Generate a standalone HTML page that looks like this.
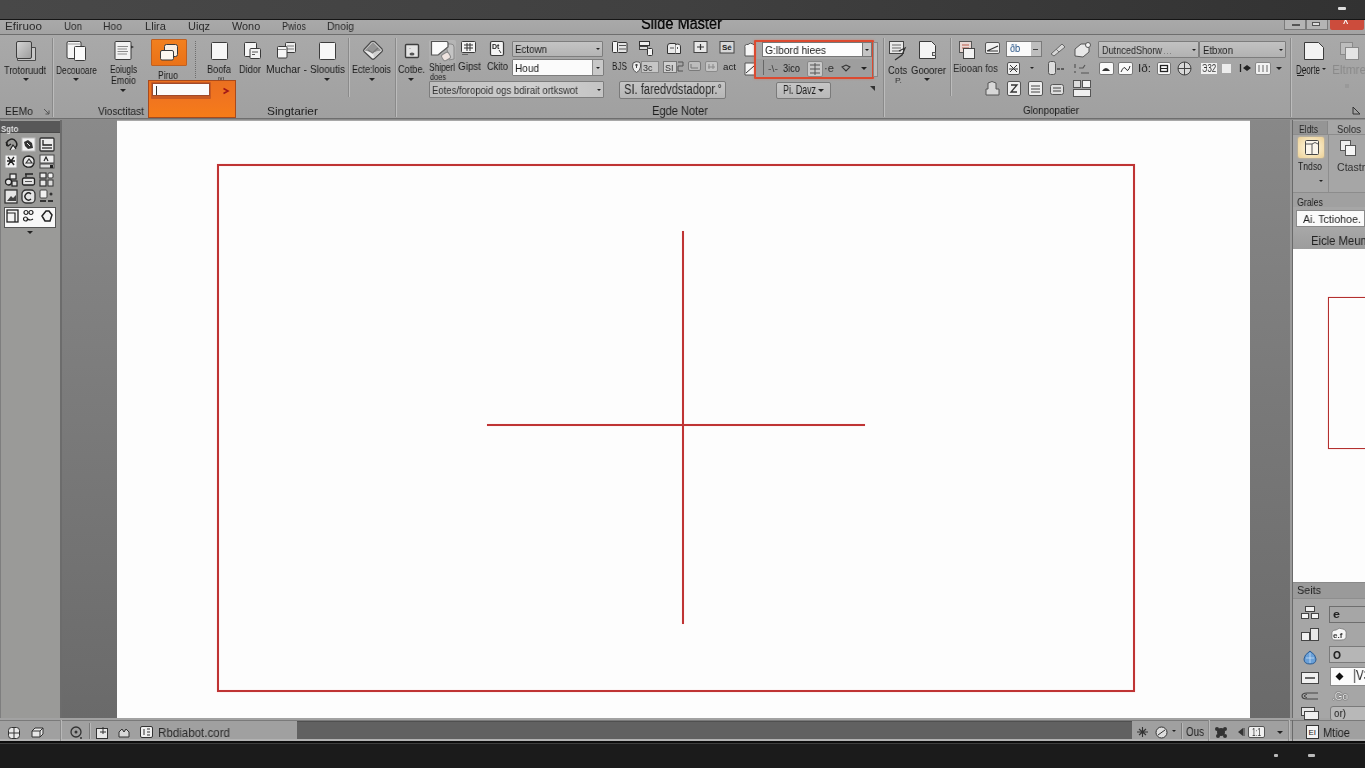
<!DOCTYPE html><html><head><meta charset="utf-8"><style>
*{margin:0;padding:0;box-sizing:border-box}
html,body{width:1365px;height:768px;overflow:hidden;background:#a8a8a8;font-family:"Liberation Sans",sans-serif;color:#222}
.a{position:absolute}
.t{white-space:nowrap;line-height:1;transform-origin:0 0;will-change:transform}
svg{overflow:visible}
</style></head><body><div class="a" style="left:0px;top:20px;width:1365px;height:14px;background:linear-gradient(#a9a9a9,#a3a3a3)"></div>
<div class="a t" style="left:641px;top:15.02px;font-size:17.39px;color:#080808;transform:scaleX(0.838);text-shadow:0 0 0.5px #000">Slide Master</div>
<div class="a" style="left:0px;top:0px;width:1365px;height:19px;background:linear-gradient(90deg,#484848,#404040 50%,#323232)"></div>
<div class="a" style="left:0px;top:19px;width:1365px;height:1px;background:#151515"></div>
<div class="a" style="left:0px;top:34px;width:1365px;height:1px;background:#6e6e6e"></div>
<div class="a" style="left:0px;top:35px;width:1365px;height:83px;background:linear-gradient(#a9a9a9,#a0a0a0)"></div>
<div class="a" style="left:0px;top:118px;width:1365px;height:1px;background:#6e6e6e"></div>
<div class="a" style="left:0px;top:119px;width:1365px;height:1px;background:#8c8c8c"></div>
<div class="a" style="left:0px;top:120px;width:60px;height:598px;background:#9a9a98;border-left:1px solid #7e7e7e"></div>
<div class="a" style="left:0px;top:121px;width:60px;height:12px;background:#585858;border-bottom:1px solid #4a4a4a"></div>
<div class="a" style="left:60px;top:120px;width:2px;height:598px;background:#6c6c6c"></div>
<div class="a" style="left:62px;top:120px;width:55px;height:598px;background:linear-gradient(#8a8a8a,#7a7a7a 50%,#6a6a6a)"></div>
<div class="a" style="left:117px;top:121px;width:1133px;height:597px;background:#fdfdfd"></div>
<div class="a" style="left:1250px;top:120px;width:40px;height:598px;background:linear-gradient(#888888,#787878 50%,#6a6a6a)"></div>
<div class="a" style="left:1290px;top:120px;width:2px;height:598px;background:#9a9a9a"></div>
<div class="a" style="left:1292px;top:120px;width:1px;height:598px;background:#6a6a6a"></div>
<div class="a" style="left:1293px;top:120px;width:72px;height:598px;background:#a6a6a6"></div>
<div class="a" style="left:0px;top:718px;width:1365px;height:2px;background:#a2a2a2"></div>
<div class="a" style="left:0px;top:720px;width:1365px;height:1px;background:#7a7a7a"></div>
<div class="a" style="left:0px;top:721px;width:1365px;height:18px;background:#a0a0a0"></div>
<div class="a" style="left:297px;top:721px;width:835px;height:18px;background:#616161;border-top:1px solid #505050"></div>
<div class="a" style="left:0px;top:739px;width:1365px;height:2px;background:#b2b2b2"></div>
<div class="a" style="left:0px;top:741px;width:1365px;height:2px;background:#0c0c0c"></div>
<div class="a" style="left:0px;top:743px;width:1365px;height:1px;background:#3e3e3e"></div>
<div class="a" style="left:0px;top:744px;width:1365px;height:24px;background:#1b1b1b"></div>
<div class="a" style="left:217px;top:164px;width:918px;height:528px;border:2px solid #bf3434;box-shadow:0 0 1px rgba(240,80,80,.35),inset 0 0 1px rgba(240,80,80,.35)"></div>
<div class="a" style="left:682px;top:231px;width:2px;height:393px;background:#bf3434;box-shadow:0 0 1px rgba(240,80,80,.35)"></div>
<div class="a" style="left:487px;top:424px;width:378px;height:2px;background:#bf3434;box-shadow:0 0 1px rgba(240,80,80,.35)"></div>
<div class="a t" style="left:5px;top:20.56px;font-size:10.87px;color:#2a2a2a;transform:scaleX(1.074);">Efiruoo</div>
<div class="a t" style="left:64px;top:20.56px;font-size:10.87px;color:#2a2a2a;transform:scaleX(0.903);">Uon</div>
<div class="a t" style="left:103px;top:20.56px;font-size:10.87px;color:#2a2a2a;transform:scaleX(0.953);">Hoo</div>
<div class="a t" style="left:145px;top:20.56px;font-size:10.87px;color:#2a2a2a;transform:scaleX(1.022);">Llira</div>
<div class="a t" style="left:188px;top:20.56px;font-size:10.87px;color:#2a2a2a;transform:scaleX(1.012);">Uiqz</div>
<div class="a t" style="left:232px;top:20.56px;font-size:10.87px;color:#2a2a2a;transform:scaleX(0.993);">Wono</div>
<div class="a t" style="left:282px;top:20.56px;font-size:10.87px;color:#2a2a2a;transform:scaleX(0.828);">Pwios</div>
<div class="a t" style="left:327px;top:20.56px;font-size:10.87px;color:#2a2a2a;transform:scaleX(0.951);">Dnoig</div>
<div class="a" style="left:1284px;top:20px;width:22px;height:10px;background:#b4b4b4;border:1px solid #7a7a7a;border-top:none"></div>
<div class="a" style="left:1292px;top:24px;width:8px;height:2px;background:#eee;border:1px solid #555"></div>
<div class="a" style="left:1306px;top:20px;width:22px;height:10px;background:#b4b4b4;border:1px solid #7a7a7a;border-top:none"></div>
<div class="a" style="left:1312px;top:22px;width:8px;height:4px;background:#ddd;border:1px solid #555"></div>
<div class="a" style="left:1330px;top:20px;width:34px;height:10px;background:#cc4c3c;border-radius:0 0 2px 2px"></div>
<div class="a t" style="left:1343px;top:19px;font-size:9px;color:#fff;font-weight:bold">^</div>
<div class="a" style="left:1338px;top:7px;width:8px;height:3px;background:#ddd;border-radius:1px"></div>
<div class="a" style="left:52px;top:38px;width:1px;height:79px;background:#8a8a8a"></div>
<div class="a" style="left:53px;top:38px;width:1px;height:79px;background:#bcbcbc"></div>
<svg class="a" style="left:15px;top:40px;" width="23" height="22" viewBox="0 0 23 22"><defs><linearGradient id="g1" x1="0" y1="0" x2="1" y2="1"><stop offset="0" stop-color="#d6d6d6"/><stop offset="1" stop-color="#9c9c9c"/></linearGradient></defs><path d="M16.5 7.5 H20.5 V20.5 H2.5 V17.5" fill="#c8c8c8" stroke="#4a4a4a" stroke-width="1"/><rect x="1.5" y="1.5" width="15" height="17" rx="1.5" fill="url(#g1)" stroke="#3e3e3e" stroke-width="1"/></svg>
<div class="a t" style="left:4px;top:65.06px;font-size:10.87px;color:#1c1c1c;transform:scaleX(0.844);">Trotoruudt</div>
<div class="a" style="left:23px;top:77.5px;width:0;height:0;border-left:3px solid transparent;border-right:3px solid transparent;border-top:3px solid #222"></div>
<div class="a t" style="left:5px;top:105.94px;font-size:11.59px;color:#1e1e1e;transform:scaleX(0.887);">EEMo</div>
<svg class="a" style="left:43px;top:108px;" width="7" height="7" viewBox="0 0 7 7"><path d="M1 1 L6 6 M6 2.5 V6 H2.5" stroke="#555" fill="none"/></svg>
<svg class="a" style="left:66px;top:40px;" width="21" height="22" viewBox="0 0 21 22"><rect x="1" y="1.5" width="14" height="17" rx="1.5" fill="#f4f4f4" stroke="#3a3a3a"/><path d="M2 4 H14" stroke="#999"/><rect x="8.5" y="6.5" width="11" height="14" rx="1" fill="#fafafa" stroke="#3a3a3a"/></svg>
<div class="a t" style="left:56px;top:65.06px;font-size:10.87px;color:#1c1c1c;transform:scaleX(0.771);">Decouoare</div>
<div class="a" style="left:73px;top:77.5px;width:0;height:0;border-left:3px solid transparent;border-right:3px solid transparent;border-top:3px solid #222"></div>
<svg class="a" style="left:114px;top:40px;" width="21" height="21" viewBox="0 0 21 21"><rect x="1" y="1.5" width="16" height="18" rx="1" fill="#f2f2f2" stroke="#3a3a3a"/><path d="M17 5.5 L20 7 L17 8.5 Z" fill="#333"/><path d="M3.5 6.5 H14 M3.5 9 H13 M3.5 11.5 H14 M3.5 14 H13" stroke="#8a8a8a" stroke-width="1.2"/></svg>
<div class="a t" style="left:110px;top:65.18px;font-size:10.14px;color:#1c1c1c;transform:scaleX(0.811);">Eoiugls</div>
<div class="a t" style="left:111px;top:76.18px;font-size:10.14px;color:#1c1c1c;transform:scaleX(0.869);">Emoio</div>
<div class="a" style="left:120px;top:88.5px;width:0;height:0;border-left:3px solid transparent;border-right:3px solid transparent;border-top:3px solid #222"></div>
<div class="a t" style="left:98px;top:105.94px;font-size:11.59px;color:#1e1e1e;transform:scaleX(0.874);">Viosctitast</div>
<div class="a" style="left:151px;top:39px;width:36px;height:27px;background:linear-gradient(#f2801e,#ea7218);border:1px solid #c06020;border-radius:1px"></div>
<svg class="a" style="left:159px;top:43px;" width="20" height="18" viewBox="0 0 20 18"><rect x="5.5" y="1.5" width="13" height="12" rx="2" fill="#f8eee2" stroke="#3a3a3a"/><rect x="1.5" y="7.5" width="13" height="9.5" rx="1.5" fill="#fdf8f0" stroke="#3a3a3a"/></svg>
<div class="a t" style="left:158px;top:71.18px;font-size:10.14px;color:#1c1c1c;transform:scaleX(0.844);">Piruo</div>
<div class="a" style="left:195px;top:41px;width:1px;height:37px;border-left:1px dotted #6d6d6d"></div>
<svg class="a" style="left:211px;top:42px;" width="17" height="18" viewBox="0 0 17 18"><rect x="0.5" y="0.5" width="16" height="17" rx="1" fill="#f7f7f7" stroke="#3c3c3c" stroke-width="1"/></svg>
<div class="a t" style="left:207px;top:65.18px;font-size:10.14px;color:#1c1c1c;transform:scaleX(0.905);">Boofa</div>
<div class="a t" style="left:218px;top:75.87px;font-size:5.80px;color:#1c1c1c;transform:scaleX(0.980);">ıvı</div>
<svg class="a" style="left:243px;top:41px;" width="19" height="19" viewBox="0 0 19 19"><rect x="1.5" y="1.5" width="12" height="14" rx="1" fill="#f6f6f6" stroke="#3a3a3a"/><rect x="7" y="7.5" width="10.5" height="10" rx="1" fill="#f2f2f2" stroke="#3a3a3a"/><path d="M9 11 H15 M9 13.5 H12" stroke="#555"/></svg>
<div class="a t" style="left:239px;top:65.18px;font-size:10.14px;color:#1c1c1c;transform:scaleX(0.907);">Didor</div>
<svg class="a" style="left:276px;top:41px;" width="21" height="18" viewBox="0 0 21 18"><rect x="9.5" y="1.5" width="10" height="10" rx="1" fill="#ececec" stroke="#3a3a3a"/><path d="M11 5 H18 M11 8 H18" stroke="#777"/><rect x="1.5" y="5.5" width="9.5" height="11.5" rx="1" fill="#f6f6f6" stroke="#3a3a3a"/><path d="M2 8.5 H10" stroke="#888"/></svg>
<div class="a t" style="left:266px;top:65.18px;font-size:10.14px;color:#1c1c1c;transform:scaleX(1.024);">Muchar -</div>
<svg class="a" style="left:319px;top:42px;" width="17" height="18" viewBox="0 0 17 18"><rect x="0.5" y="0.5" width="16" height="17" rx="1" fill="#f7f7f7" stroke="#3c3c3c" stroke-width="1"/></svg>
<div class="a t" style="left:310px;top:65.18px;font-size:10.14px;color:#1c1c1c;transform:scaleX(0.970);">Slooutis</div>
<div class="a" style="left:324px;top:77.5px;width:0;height:0;border-left:3px solid transparent;border-right:3px solid transparent;border-top:3px solid #222"></div>
<div class="a" style="left:348px;top:38px;width:1px;height:59px;background:#8a8a8a"></div>
<div class="a" style="left:349px;top:38px;width:1px;height:59px;background:#bcbcbc"></div>
<svg class="a" style="left:362px;top:40px;" width="22" height="21" viewBox="0 0 22 21"><path d="M11 1.5 Q12 1 13 2 L20 9 Q21 10.5 20 11.5 L12.5 18.5 Q11 20 9.5 18.5 L2 11.5 Q1 10.5 2 9.5 L9 2 Q10 1 11 1.5 Z" fill="#ededed" stroke="#4a4a4a" stroke-width="1.2"/><path d="M11 2 L19.5 10.5 L11 12.5 L2.5 10.5 Z" fill="#959595"/><path d="M11 12.5 L19.5 10.5 L12 18 Z" fill="#cfcfcf"/><path d="M6 10 L10.5 13 L16 8" stroke="#777" stroke-width="1.2" fill="none"/></svg>
<div class="a t" style="left:352px;top:65.18px;font-size:10.14px;color:#1c1c1c;transform:scaleX(0.887);">Ecte:loois</div>
<div class="a" style="left:369px;top:77.5px;width:0;height:0;border-left:3px solid transparent;border-right:3px solid transparent;border-top:3px solid #222"></div>
<div class="a t" style="left:267px;top:105.94px;font-size:11.59px;color:#1e1e1e;transform:scaleX(1.028);">Singtarier</div>
<div class="a" style="left:395px;top:38px;width:1px;height:79px;background:#8a8a8a"></div>
<div class="a" style="left:396px;top:38px;width:1px;height:79px;background:#bcbcbc"></div>
<div class="a" style="left:148px;top:80px;width:88px;height:38px;background:linear-gradient(#ea7020,#f07420 45%,#f67c18);border:1px solid #a84a1c"></div>
<div class="a" style="left:151px;top:82px;width:60px;height:17px;background:#c85a22;border-radius:1px"></div>
<div class="a" style="left:152px;top:83px;width:58px;height:13px;background:#fbfbfb;border:1px solid #a04a2a"></div>
<div class="a" style="left:156px;top:86px;width:1px;height:9px;background:#333"></div>
<svg class="a" style="left:222px;top:87px;" width="8" height="8" viewBox="0 0 8 8"><path d="M1.5 1.5 L6 4 L1.5 6.5" stroke="#a01818" stroke-width="1.6" fill="none"/></svg>
<svg class="a" style="left:404px;top:43px;" width="16" height="16" viewBox="0 0 16 16"><rect x="1.5" y="1.5" width="13" height="13" rx="1" fill="#e4e4e4" stroke="#3e3e3e" stroke-width="1.4"/><ellipse cx="8" cy="11" rx="2.5" ry="1.5" fill="#555"/><path d="M6 5 V6" stroke="#999"/></svg>
<div class="a t" style="left:398px;top:65.18px;font-size:10.14px;color:#1c1c1c;transform:scaleX(0.903);">Cotbe.</div>
<div class="a" style="left:408px;top:77.5px;width:0;height:0;border-left:3px solid transparent;border-right:3px solid transparent;border-top:3px solid #222"></div>
<div class="a" style="left:429px;top:40px;width:27px;height:25px;background:linear-gradient(#b6b6b6,#aaaaaa);border-radius:2px"></div>
<svg class="a" style="left:429px;top:40px;" width="27" height="24" viewBox="0 0 27 24"><path d="M17 4 H22 Q25 4 25 7 V19 L20 20 Z" fill="#c4c4c4" stroke="#8a8a8a"/><path d="M2.5 1.5 H17.5 Q19 1.5 19 3 V7 L9 15 H2.5 Z" fill="#fbfbfb" stroke="#555" stroke-width="1.2"/><path d="M9 15 L19 7" stroke="#666"/><rect x="13" y="13" width="8" height="7" rx="2" fill="#efe4e0" stroke="#8a8a8a" transform="rotate(-30 17 16.5)"/></svg>
<div class="a t" style="left:429px;top:63.18px;font-size:10.14px;color:#1c1c1c;transform:scaleX(0.823);">Shiperl</div>
<div class="a t" style="left:430px;top:73.41px;font-size:8.70px;color:#1c1c1c;transform:scaleX(0.849);">does</div>
<svg class="a" style="left:460px;top:40px;" width="18" height="16" viewBox="0 0 18 16"><rect x="1.5" y="1.5" width="14" height="11" rx="1" fill="#f4f4f4" stroke="#3a3a3a"/><path d="M4 5 H13 M4 8 H13 M7 3 V11 M10 3 V11" stroke="#333"/><path d="M2 14.5 H8" stroke="#666"/></svg>
<div class="a t" style="left:458px;top:62.18px;font-size:10.14px;color:#1c1c1c;transform:scaleX(0.971);">Gipst</div>
<svg class="a" style="left:489px;top:40px;" width="16" height="17" viewBox="0 0 16 17"><rect x="1.5" y="1.5" width="13" height="14" rx="1.5" fill="#f4f4f4" stroke="#3a3a3a" stroke-width="1.2"/><text x="3" y="9" font-size="7" font-weight="bold" font-family="Liberation Sans" fill="#222">Dt</text><path d="M10 10 L12 13" stroke="#333"/></svg>
<div class="a t" style="left:487px;top:62.18px;font-size:10.14px;color:#1c1c1c;transform:scaleX(0.909);">Ckito</div>
<div class="a" style="left:512px;top:41px;width:91px;height:16px;background:linear-gradient(#c4c4c4,#b4b4b4);border:1px solid #7d7d7d;border-radius:1px"></div>
<div class="a" style="left:595.5px;top:48.2px;width:0;height:0;border-left:2.5px solid transparent;border-right:2.5px solid transparent;border-top:2.5px solid #222"></div>
<div class="a t" style="left:515px;top:44.31px;font-size:10.58px;color:#1c1c1c;transform:scaleX(0.922);">Ectown</div>
<div class="a" style="left:512px;top:59px;width:92px;height:17px;background:#fbfbfb;border:1px solid #7d7d7d;border-radius:1px"></div>
<div class="a" style="left:592px;top:60px;width:11px;height:15px;background:#c8c8c8;border-left:1px solid #8a8a8a"></div>
<div class="a" style="left:595.5px;top:66.8px;width:0;height:0;border-left:2.5px solid transparent;border-right:2.5px solid transparent;border-top:2.5px solid #222"></div>
<div class="a t" style="left:515px;top:63.06px;font-size:10.87px;color:#1c1c1c;transform:scaleX(0.924);">Houd</div>
<div class="a" style="left:429px;top:81px;width:175px;height:17px;background:linear-gradient(90deg,#bdbdbd,#d0d0d0 60%,#c4c4c4);border:1px solid #7d7d7d;border-radius:1px"></div>
<div class="a" style="left:596.5px;top:88.8px;width:0;height:0;border-left:2.5px solid transparent;border-right:2.5px solid transparent;border-top:2.5px solid #222"></div>
<div class="a t" style="left:432px;top:85.04px;font-size:11.01px;color:#333;transform:scaleX(0.864);">Eotes/foropoid ogs bdirait ortkswot</div>
<svg class="a" style="left:611px;top:40px;" width="17" height="14" viewBox="0 0 17 14"><rect x="1.5" y="1.5" width="5" height="11" rx="1" fill="#f4f4f4" stroke="#333"/><rect x="6.5" y="2.5" width="9.5" height="10" rx="1" fill="#e4e4e4" stroke="#333"/><path d="M8 5.5 H15 M8 9 H15" stroke="#555"/></svg>
<svg class="a" style="left:638px;top:40px;" width="16" height="16" viewBox="0 0 16 16"><rect x="1.5" y="1.5" width="10" height="4" fill="#eee" stroke="#333"/><rect x="1.5" y="6.5" width="8" height="3" fill="#ddd" stroke="#444"/><rect x="9.5" y="8.5" width="5" height="7" rx="1" fill="#f4f4f4" stroke="#333"/></svg>
<svg class="a" style="left:666px;top:42px;" width="16" height="13" viewBox="0 0 16 13"><path d="M1.5 4 Q1.5 1.5 4 1.5 H9.5 V11.5 H1.5 Z" fill="#eaeaea" stroke="#333"/><path d="M9.5 2.5 Q14.5 1 14.5 5 V11.5 H9.5" fill="#f4f4f4" stroke="#333"/><path d="M4 6 H8 M11.5 5 V7" stroke="#555"/></svg>
<svg class="a" style="left:693px;top:40px;" width="15" height="13" viewBox="0 0 15 13"><rect x="1" y="1.5" width="13" height="11" fill="#e8e8e8" stroke="#444"/><path d="M4 7 H11 M7.5 4 V10" stroke="#333" stroke-width="1.2"/></svg>
<svg class="a" style="left:719px;top:40px;" width="16" height="14" viewBox="0 0 16 14"><rect x="1" y="1.5" width="14" height="11.5" fill="#d8d8d8" stroke="#444"/><text x="3" y="10" font-size="8" font-weight="bold" font-family="Liberation Sans" fill="#222">Sé</text></svg>
<svg class="a" style="left:743px;top:42px;" width="14" height="15" viewBox="0 0 14 15"><path d="M2 6 Q1 2 5 2.5 Q7 0 10 2 Q13 3 12 7 V14 H2 Z" fill="#f6f6f6" stroke="#555"/></svg>
<div class="a t" style="left:612px;top:60.94px;font-size:11.59px;color:#1c1c1c;transform:scaleX(0.705);">BJS</div>
<svg class="a" style="left:631px;top:60px;" width="29" height="14" viewBox="0 0 29 14"><rect x="10.5" y="1.5" width="17" height="11" fill="#c6c6c6" stroke="#8a8a8a"/><path d="M2 3 Q5 1 8 2 Q10 3 9.5 7 Q9 11 5.5 12.5 Q2 11 1.5 7 Z" fill="#efefef" stroke="#555"/><text x="12" y="10.5" font-size="9" font-family="Liberation Sans" fill="#333">3c</text><path d="M4 5 H7 M5.5 4 V8" stroke="#444"/></svg>
<svg class="a" style="left:662px;top:60px;" width="23" height="14" viewBox="0 0 23 14"><rect x="1.5" y="1.5" width="13" height="11" fill="#d0d0d0" stroke="#777"/><text x="3" y="10.5" font-size="9" font-family="Liberation Sans" fill="#333">SI</text><path d="M16 2 H21 V6 H16 V11 H21" stroke="#555" fill="none"/></svg>
<svg class="a" style="left:688px;top:61px;" width="13" height="10" viewBox="0 0 13 10"><rect x="0.5" y="0.5" width="12" height="9" rx="1.5" fill="#bdbdbd" stroke="#7a7a7a"/><path d="M3 3 V7 M3 7 H10" stroke="#777"/></svg>
<svg class="a" style="left:705px;top:61px;" width="13" height="11" viewBox="0 0 13 11"><rect x="0.5" y="0.5" width="12" height="10" rx="1.5" fill="#c4c4c4" stroke="#8a8a8a"/><path d="M4 3 V8 M8 3 V8 M3 6 H10" stroke="#888"/></svg>
<div class="a t" style="left:723px;top:63.41px;font-size:8.70px;color:#1c1c1c;transform:scaleX(1.121);">act</div>
<svg class="a" style="left:744px;top:62px;" width="12" height="14" viewBox="0 0 12 14"><path d="M1 1 H11 V13 H1 Z" fill="#f4f4f4" stroke="#555"/><path d="M2 11 L10 4" stroke="#333"/></svg>
<div class="a" style="left:754px;top:40px;width:120px;height:39px;border:2px solid #dc4a30;border-radius:1px;box-shadow:0 0 2px rgba(235,90,60,.6),inset 0 0 1.5px rgba(235,90,60,.5)"></div>
<div class="a" style="left:762px;top:42px;width:101px;height:15px;background:#fdfdfd;border:1px solid #777"></div>
<div class="a" style="left:862px;top:42px;width:10px;height:15px;background:#c4c4c4;border:1px solid #777"></div>
<div class="a" style="left:864.5px;top:48.8px;width:0;height:0;border-left:2.5px solid transparent;border-right:2.5px solid transparent;border-top:2.5px solid #222"></div>
<div class="a t" style="left:765px;top:44.68px;font-size:10.72px;color:#222;transform:scaleX(0.956);">G:lbord hiees</div>
<div class="a" style="left:873px;top:42px;width:5px;height:35px;background:#bcbcbc;border:1px solid #888"></div>
<div class="a" style="left:756px;top:59px;width:116px;height:18px;background:#9e9e9e"></div>
<div class="a" style="left:763px;top:60px;width:1px;height:15px;background:#666"></div>
<div class="a t" style="left:768px;top:65.41px;font-size:8.70px;color:#444;transform:scaleX(1.218);">-\-</div>
<div class="a t" style="left:783px;top:62.94px;font-size:11.59px;color:#222;transform:scaleX(0.799);">3ico</div>
<svg class="a" style="left:807px;top:61px;" width="16" height="16" viewBox="0 0 16 16"><rect x="0.5" y="0.5" width="15" height="15" rx="1.5" fill="#c8c8c8" stroke="#888"/><path d="M3 4 H13 M3 8 H13 M3 12 H13 M8 2 V14" stroke="#555"/></svg>
<div class="a t" style="left:824px;top:64.18px;font-size:10.14px;color:#333;transform:scaleX(1.109);">·e</div>
<svg class="a" style="left:841px;top:64px;" width="10" height="8" viewBox="0 0 10 8"><path d="M1 3 L5 1 L9 3 L5 7 Z" fill="none" stroke="#333" stroke-width="1.1"/></svg>
<div class="a" style="left:861px;top:66.5px;width:0;height:0;border-left:3px solid transparent;border-right:3px solid transparent;border-top:3px solid #222"></div>
<div class="a" style="left:619px;top:81px;width:107px;height:18px;background:linear-gradient(#c6c6c6,#b6b6b6);border:1px solid #7a7a7a;border-radius:2px"></div>
<div class="a t" style="left:624px;top:83.10px;font-size:13.77px;color:#2a2a2a;transform:scaleX(0.809);">SI. faredvdstadopr.°</div>
<div class="a" style="left:776px;top:82px;width:55px;height:17px;background:linear-gradient(#c6c6c6,#b8b8b8);border:1px solid #7a7a7a;border-radius:2px"></div>
<div class="a t" style="left:783px;top:84.90px;font-size:11.88px;color:#222;transform:scaleX(0.746);">Pi. Davz</div>
<div class="a" style="left:818px;top:88.5px;width:0;height:0;border-left:3px solid transparent;border-right:3px solid transparent;border-top:3px solid #222"></div>
<div class="a" style="left:870px;top:86px;width:0;height:0;border-top:5px solid #333;border-left:5px solid transparent"></div>
<div class="a t" style="left:652px;top:103.71px;font-size:13.04px;color:#1e1e1e;transform:scaleX(0.849);">Egde Noter</div>
<div class="a" style="left:883px;top:38px;width:1px;height:79px;background:#8a8a8a"></div>
<div class="a" style="left:884px;top:38px;width:1px;height:79px;background:#bcbcbc"></div>
<svg class="a" style="left:889px;top:41px;" width="19" height="20" viewBox="0 0 19 20"><rect x="0.5" y="0.5" width="14" height="12" fill="#e8e8e8" stroke="#444"/><path d="M3 4 H12 M3 7 H12 M3 10 H12" stroke="#666"/><path d="M10 10 L16 7 L13 14 L6 19" stroke="#333" stroke-width="1.3" fill="none"/></svg>
<div class="a t" style="left:888px;top:65.06px;font-size:10.87px;color:#1c1c1c;transform:scaleX(0.850);">Cots</div>
<div class="a t" style="left:895px;top:76.64px;font-size:7.25px;color:#333;transform:scaleX(1.184);">P.</div>
<svg class="a" style="left:919px;top:41px;" width="17" height="18" viewBox="0 0 17 18"><path d="M0.5 0.5 H12.5 L16.5 4.5 V17.5 H0.5 Z" fill="#f4f4f4" stroke="#3a3a3a" stroke-width="1"/></svg>
<div class="a" style="left:932px;top:52px;width:4px;height:4px;background:#ddd;border:1px solid #555"></div>
<div class="a t" style="left:911px;top:65.06px;font-size:10.87px;color:#1c1c1c;transform:scaleX(0.878);">Gooorer</div>
<div class="a" style="left:924px;top:77.5px;width:0;height:0;border-left:3px solid transparent;border-right:3px solid transparent;border-top:3px solid #222"></div>
<div class="a" style="left:950px;top:38px;width:1px;height:58px;background:#8a8a8a"></div>
<div class="a" style="left:951px;top:38px;width:1px;height:58px;background:#bcbcbc"></div>
<svg class="a" style="left:959px;top:41px;" width="16" height="18" viewBox="0 0 16 18"><rect x="0.5" y="0.5" width="12" height="11" fill="#e9d8d4" stroke="#555"/><path d="M3 4 H10 M3 7 H10" stroke="#b85a4a"/><rect x="4.5" y="7.5" width="11" height="10" fill="#f2f2f2" stroke="#444"/></svg>
<svg class="a" style="left:985px;top:42px;" width="15" height="12" viewBox="0 0 15 12"><rect x="0.5" y="0.5" width="14" height="11" rx="1.5" fill="#f0f0f0" stroke="#555"/><path d="M2 9 L13 4 M2 9 H13" stroke="#333" stroke-width="1.2"/></svg>
<div class="a" style="left:1006px;top:41px;width:36px;height:16px;background:#fafafa;border:1px solid #7a7a7a"></div>
<div class="a" style="left:1031px;top:42px;width:10px;height:14px;background:#bdbdbd"></div>
<div class="a" style="left:1033px;top:49px;width:5px;height:1px;background:#444"></div>
<div class="a t" style="left:1010px;top:44.18px;font-size:10.14px;color:#1a4a80;transform:scaleX(0.886);">ðb</div>
<svg class="a" style="left:1048px;top:42px;" width="18" height="14" viewBox="0 0 18 14"><path d="M3 12 L14 2 L17 5 L6 14 Z" fill="#d8d8d8" stroke="#666"/><path d="M8 7 L11 10" stroke="#777"/></svg>
<svg class="a" style="left:1073px;top:41px;" width="18" height="17" viewBox="0 0 18 17"><path d="M2 15 V8 L8 3 H13 L16 7 V11 L10 16 Z" fill="#e8e8e8" stroke="#555"/><circle cx="15" cy="4" r="2.5" fill="#f4f4f4" stroke="#555"/></svg>
<div class="a t" style="left:953px;top:62.94px;font-size:11.59px;color:#2a2a2a;transform:scaleX(0.821);">Eiooan fos</div>
<svg class="a" style="left:1007px;top:62px;" width="13" height="13" viewBox="0 0 13 13"><rect x="0.5" y="0.5" width="12" height="12" rx="1.5" fill="#f0f0f0" stroke="#555"/><path d="M3 3 L10 10 M10 3 L3 10 M2 7 H11" stroke="#333"/></svg>
<div class="a" style="left:1029.5px;top:66.8px;width:0;height:0;border-left:2.5px solid transparent;border-right:2.5px solid transparent;border-top:2.5px solid #222"></div>
<svg class="a" style="left:1048px;top:61px;" width="18" height="15" viewBox="0 0 18 15"><rect x="0.5" y="0.5" width="7" height="13" rx="2" fill="#ddd" stroke="#555"/><path d="M9 8 H12 M13 8 H16" stroke="#444" stroke-width="1.5"/></svg>
<svg class="a" style="left:1073px;top:62px;" width="18" height="13" viewBox="0 0 18 13"><path d="M2 2 V6 M2 9 V11 M6 6 H10 L12 3 M8 11 H16" stroke="#555" stroke-width="1.2" fill="none"/></svg>
<svg class="a" style="left:985px;top:80px;" width="15" height="16" viewBox="0 0 15 16"><path d="M3 3 Q7 0 11 3 V9 H14 V15 H1 V9 H3 Z" fill="#d8d8d8" stroke="#555"/></svg>
<svg class="a" style="left:1007px;top:81px;" width="14" height="15" viewBox="0 0 14 15"><rect x="0.5" y="0.5" width="13" height="14" rx="1.5" fill="#f0f0f0" stroke="#555"/><path d="M4 4 H10 L4 11 H10" stroke="#333" stroke-width="1.3" fill="none"/></svg>
<svg class="a" style="left:1028px;top:81px;" width="15" height="15" viewBox="0 0 15 15"><rect x="0.5" y="0.5" width="14" height="14" rx="1.5" fill="#ededed" stroke="#555"/><path d="M3 5 H12 M3 8 H12 M3 11 H12" stroke="#444"/></svg>
<svg class="a" style="left:1050px;top:81px;" width="15" height="15" viewBox="0 0 15 15"><rect x="0.5" y="3.5" width="13" height="10" rx="2" fill="#ddd" stroke="#555"/><path d="M3 7 H11 M3 10 H11" stroke="#444"/></svg>
<svg class="a" style="left:1073px;top:80px;" width="18" height="17" viewBox="0 0 18 17"><rect x="0.5" y="0.5" width="7" height="7" fill="#ddd" stroke="#555"/><rect x="9.5" y="0.5" width="8" height="7" fill="#f4f4f4" stroke="#555"/><rect x="0.5" y="9.5" width="17" height="7" fill="#f0f0f0" stroke="#555"/></svg>
<div class="a t" style="left:1023px;top:104.94px;font-size:11.59px;color:#1e1e1e;transform:scaleX(0.844);">Glonpopatier</div>
<div class="a" style="left:1098px;top:41px;width:101px;height:17px;background:linear-gradient(#c2c2c2,#b2b2b2);border:1px solid #7d7d7d;border-radius:1px"></div>
<div class="a" style="left:1191.5px;top:48.8px;width:0;height:0;border-left:2.5px solid transparent;border-right:2.5px solid transparent;border-top:2.5px solid #222"></div>
<div class="a t" style="left:1102px;top:45.83px;font-size:10.43px;color:#2a2a2a;transform:scaleX(0.877);">DutncedShorw</div>
<div class="a t" style="left:1163px;top:49.99px;font-size:5.07px;color:#555;transform:scaleX(2.129);">...</div>
<div class="a" style="left:1199px;top:41px;width:87px;height:17px;background:linear-gradient(#c2c2c2,#b2b2b2);border:1px solid #7d7d7d;border-radius:1px"></div>
<div class="a" style="left:1278.5px;top:48.8px;width:0;height:0;border-left:2.5px solid transparent;border-right:2.5px solid transparent;border-top:2.5px solid #222"></div>
<div class="a t" style="left:1203px;top:45.83px;font-size:10.43px;color:#222;transform:scaleX(0.923);">Etbxon</div>
<svg class="a" style="left:1099px;top:62px;" width="15" height="13" viewBox="0 0 15 13"><rect x="0.5" y="0.5" width="14" height="12" rx="1.5" fill="#fafafa" stroke="#777"/><path d="M3 9 Q7 3 11 9 Z" fill="#333"/></svg>
<svg class="a" style="left:1118px;top:62px;" width="15" height="13" viewBox="0 0 15 13"><rect x="0.5" y="0.5" width="14" height="12" rx="1.5" fill="#fafafa" stroke="#777"/><path d="M3 10 Q6 3 8 7 T12 4" stroke="#333" fill="none"/></svg>
<div class="a t" style="left:1138px;top:62.94px;font-size:11.59px;color:#222;transform:scaleX(1.008);">Ið:</div>
<svg class="a" style="left:1157px;top:62px;" width="14" height="13" viewBox="0 0 14 13"><rect x="0.5" y="0.5" width="13" height="12" rx="1.5" fill="#fafafa" stroke="#777"/><rect x="3.5" y="3.5" width="7" height="6" fill="none" stroke="#222" stroke-width="1.3"/><path d="M3 6.5 H11" stroke="#222"/></svg>
<svg class="a" style="left:1177px;top:61px;" width="15" height="15" viewBox="0 0 15 15"><circle cx="7.5" cy="7.5" r="6.5" fill="#d8d8d8" stroke="#444"/><path d="M7.5 1 V14 M1 7.5 H14" stroke="#444"/></svg>
<div class="a" style="left:1201px;top:63px;width:16px;height:11px;background:#f0f0f0"></div>
<div class="a t" style="left:1202px;top:62.94px;font-size:11.59px;color:#333;transform:scaleX(0.647);">ЭЗ2</div>
<div class="a" style="left:1222px;top:64px;width:9px;height:9px;background:#ececec"></div>
<svg class="a" style="left:1239px;top:63px;" width="13" height="10" viewBox="0 0 13 10"><path d="M1.5 1 V9" stroke="#222" stroke-width="1.3"/><path d="M4 5 L8 2 V8 Z M8 2 L12 5 L8 8 Z" fill="#222"/></svg>
<svg class="a" style="left:1255px;top:62px;" width="16" height="13" viewBox="0 0 16 13"><rect x="0.5" y="0.5" width="15" height="12" rx="1.5" fill="#f2f2f2" stroke="#888"/><path d="M4 3 V10 M8 3 V10 M12 3 V10" stroke="#666"/></svg>
<div class="a" style="left:1276px;top:66.5px;width:0;height:0;border-left:3px solid transparent;border-right:3px solid transparent;border-top:3px solid #222"></div>
<div class="a" style="left:1290px;top:38px;width:1px;height:79px;background:#8a8a8a"></div>
<div class="a" style="left:1291px;top:38px;width:1px;height:79px;background:#bcbcbc"></div>
<svg class="a" style="left:1304px;top:42px;" width="20" height="18" viewBox="0 0 20 18"><path d="M0.5 0.5 H14.5 L19.5 5.5 V17.5 H0.5 Z" fill="#f2f2f2" stroke="#3a3a3a" stroke-width="1"/></svg>
<div class="a t" style="left:1296px;top:62.71px;font-size:13.04px;color:#1e1e1e;transform:scaleX(0.613);">Deorte</div>
<div class="a" style="left:1297px;top:75px;width:7px;height:1px;background:#222"></div>
<div class="a" style="left:1322px;top:68.0px;width:0;height:0;border-left:2px solid transparent;border-right:2px solid transparent;border-top:2px solid #222"></div>
<svg class="a" style="left:1340px;top:42px;" width="19" height="18" viewBox="0 0 19 18"><rect x="0.5" y="0.5" width="12" height="12" fill="#bdbdbd" stroke="#8a8a8a"/><rect x="5.5" y="5.5" width="13" height="12" fill="#e4e4e4" stroke="#8a8a8a"/></svg>
<div class="a t" style="left:1332px;top:62.71px;font-size:13.04px;color:#8a8a8a;transform:scaleX(0.904);">Eltmrer</div>
<div class="a" style="left:1345px;top:84px;width:4px;height:4px;background:#999"></div>
<svg class="a" style="left:1352px;top:106px;" width="9" height="9" viewBox="0 0 9 9"><path d="M1 1 V8 H8 Z M1 1 L8 8" stroke="#333" fill="none"/></svg>
<div class="a t" style="left:1px;top:123.79px;font-size:9.42px;color:#e0e0e0;transform:scaleX(0.826);font-weight:bold">Sgto</div>
<svg class="a" style="left:4px;top:137px;" width="14" height="15" viewBox="0 0 14 15"><path d="M3 9 A5 5 0 1 1 11 11" fill="none" stroke="#222" stroke-width="1.5"/><path d="M2 5 L4 9 L7 7" fill="none" stroke="#222" stroke-width="1.3"/><path d="M6 13 L9 8 L12 12" fill="#eee" stroke="#222" stroke-width="1.2"/></svg>
<svg class="a" style="left:21px;top:137px;" width="15" height="15" viewBox="0 0 15 15"><rect x="1" y="1" width="13" height="13" fill="#f2f2f2" stroke="#bbb"/><path d="M3 5 L7 3 L11 6 L12 11 L7 12 L4 9 Z" fill="#333"/><path d="M6 6 L9 9" stroke="#eee"/></svg>
<svg class="a" style="left:39px;top:137px;" width="16" height="15" viewBox="0 0 16 15"><rect x="1" y="1" width="14" height="13" rx="1" fill="#ededed" stroke="#333" stroke-width="1.3"/><path d="M4 3 V8 H13" stroke="#222" stroke-width="1.3" fill="none"/><path d="M3 11 H13" stroke="#444" stroke-width="1.5"/></svg>
<svg class="a" style="left:4px;top:154px;" width="14" height="15" viewBox="0 0 14 15"><rect x="1" y="1" width="12" height="13" fill="#f4f4f4" stroke="#999"/><path d="M4 3 L7 7 L4 11 M10 3 L7 7 L10 11 M3 7 H11" stroke="#222" stroke-width="1.4" fill="none"/></svg>
<svg class="a" style="left:21px;top:154px;" width="15" height="15" viewBox="0 0 15 15"><path d="M2 8 Q2 2 8 2 Q14 3 13 9 Q12 14 6 13 Q2 12 2 8 Z" fill="#e8e8e8" stroke="#222" stroke-width="1.3"/><path d="M5 9 L8 5 L11 9 Z" fill="none" stroke="#333" stroke-width="1.2"/></svg>
<svg class="a" style="left:39px;top:154px;" width="16" height="15" viewBox="0 0 16 15"><rect x="1" y="1" width="14" height="8" fill="#eee" stroke="#444"/><path d="M5 7 L7 3 L9 7" stroke="#222" stroke-width="1.2" fill="none"/><rect x="1" y="10" width="14" height="4" fill="#ddd" stroke="#444"/><rect x="11" y="11" width="3" height="3" fill="#222"/></svg>
<svg class="a" style="left:4px;top:172px;" width="14" height="15" viewBox="0 0 14 15"><circle cx="4.5" cy="10" r="3" fill="#e8e8e8" stroke="#222" stroke-width="1.3"/><rect x="6" y="2" width="6" height="5" fill="#eee" stroke="#222" stroke-width="1.2"/><rect x="8" y="9" width="5" height="5" fill="#ddd" stroke="#222" stroke-width="1.2"/></svg>
<svg class="a" style="left:21px;top:172px;" width="15" height="15" viewBox="0 0 15 15"><path d="M4 2 H12 M5 2 V5" stroke="#222" stroke-width="1.3"/><rect x="1.5" y="6" width="12" height="7" rx="1.5" fill="#e4e4e4" stroke="#222" stroke-width="1.3"/><path d="M4 9.5 H11" stroke="#555"/></svg>
<svg class="a" style="left:39px;top:172px;" width="16" height="15" viewBox="0 0 16 15"><rect x="1" y="1" width="6" height="5" fill="#eee" stroke="#333" stroke-width="1.2"/><rect x="9" y="1" width="5" height="5" rx="1" fill="#f4f4f4" stroke="#333"/><rect x="1" y="8" width="6" height="6" fill="#e8e8e8" stroke="#333" stroke-width="1.2"/><rect x="9" y="8" width="5" height="6" fill="#ddd" stroke="#333"/></svg>
<svg class="a" style="left:4px;top:189px;" width="14" height="15" viewBox="0 0 14 15"><rect x="1" y="1" width="12" height="13" fill="#e6e6e6" stroke="#333" stroke-width="1.3"/><path d="M3 12 L7 7 L9 9 L12 6 V12 Z" fill="#444"/></svg>
<svg class="a" style="left:21px;top:189px;" width="15" height="15" viewBox="0 0 15 15"><rect x="1" y="1" width="13" height="13" rx="4" fill="#e4e4e4" stroke="#333" stroke-width="1.3"/><path d="M10 5 A3.5 3.5 0 1 0 10 10" fill="none" stroke="#222" stroke-width="1.4"/></svg>
<svg class="a" style="left:39px;top:189px;" width="16" height="15" viewBox="0 0 16 15"><rect x="1" y="1" width="7" height="8" rx="1" fill="#f0f0f0" stroke="#444"/><circle cx="12" cy="5" r="1.5" fill="#333"/><path d="M1 12 H7 M9 12 H14" stroke="#333" stroke-width="1.8"/></svg>
<div class="a" style="left:4px;top:207px;width:52px;height:21px;background:#f8f8f8;border:1px solid #555"></div>
<svg class="a" style="left:6px;top:209px;" width="14" height="15" viewBox="0 0 14 15"><rect x="1" y="1" width="11" height="12" fill="#f4f4f4" stroke="#222" stroke-width="1.3"/><path d="M1 4 H9 V13" stroke="#222" stroke-width="1.2" fill="none"/></svg>
<svg class="a" style="left:22px;top:209px;" width="13" height="14" viewBox="0 0 13 14"><circle cx="4" cy="3.5" r="2" fill="none" stroke="#222" stroke-width="1.2"/><circle cx="9" cy="3.5" r="2" fill="none" stroke="#222" stroke-width="1.2"/><circle cx="3.5" cy="10" r="2" fill="none" stroke="#222" stroke-width="1.2"/><path d="M6 10 Q8 12 11 10" stroke="#222" stroke-width="1.2" fill="none"/></svg>
<svg class="a" style="left:40px;top:209px;" width="14" height="14" viewBox="0 0 14 14"><path d="M2 7 L6 2 L9 2 L12 6 L10 12 H5 Z" fill="#f4f4f4" stroke="#222" stroke-width="1.5"/></svg>
<div class="a" style="left:27px;top:230.5px;width:0;height:0;border-left:3px solid transparent;border-right:3px solid transparent;border-top:3px solid #222"></div>
<div class="a" style="left:1293px;top:121px;width:35px;height:14px;background:#959595;border-right:1px solid #888"></div>
<div class="a" style="left:1328px;top:121px;width:37px;height:14px;background:#a6a6a6"></div>
<div class="a t" style="left:1299px;top:124.06px;font-size:10.87px;color:#2a2a2a;transform:scaleX(0.786);">Eldts</div>
<div class="a t" style="left:1337px;top:124.06px;font-size:10.87px;color:#2a2a2a;transform:scaleX(0.883);">Solos</div>
<div class="a" style="left:1293px;top:134px;width:72px;height:1px;background:#8c8c8c"></div>
<div class="a" style="left:1328px;top:135px;width:1px;height:57px;background:#8e8e8e"></div>
<div class="a" style="left:1298px;top:137px;width:26px;height:21px;background:radial-gradient(ellipse at center,#fbeecc 30%,#ecd096 100%);box-shadow:0 0 2px #e8c888;border-radius:2px"></div>
<svg class="a" style="left:1303px;top:139px;" width="17" height="17" viewBox="0 0 17 17"><rect x="2.5" y="1.5" width="13" height="14" rx="1" fill="#fbf6ec" stroke="#444"/><path d="M2.5 5 H9 V15.5 M9 5 Q12 2 15 5" stroke="#555" fill="none"/></svg>
<div class="a t" style="left:1298px;top:160.94px;font-size:11.59px;color:#222;transform:scaleX(0.745);">Tndso</div>
<div class="a" style="left:1318.5px;top:179.8px;width:0;height:0;border-left:2.5px solid transparent;border-right:2.5px solid transparent;border-top:2.5px solid #222"></div>
<svg class="a" style="left:1340px;top:140px;" width="17" height="17" viewBox="0 0 17 17"><rect x="0.5" y="0.5" width="10" height="10" fill="#eee" stroke="#555"/><rect x="5.5" y="5.5" width="10" height="10" fill="#f6f6f6" stroke="#555"/></svg>
<div class="a t" style="left:1337px;top:161.51px;font-size:10.58px;color:#333;transform:scaleX(0.992);">Ctastr</div>
<div class="a" style="left:1293px;top:192px;width:72px;height:1px;background:#8c8c8c"></div>
<div class="a" style="left:1293px;top:193px;width:72px;height:14px;background:#a0a0a0"></div>
<div class="a t" style="left:1297px;top:196.56px;font-size:10.87px;color:#222;transform:scaleX(0.812);">Grales</div>
<div class="a" style="left:1296px;top:210px;width:69px;height:17px;background:#fafafa;border:1px solid #8a8a8a"></div>
<div class="a t" style="left:1303px;top:214.24px;font-size:11.59px;color:#1e1e1e;transform:scaleX(0.921);">Ai. Tctiohoe.</div>
<div class="a" style="left:1293px;top:227px;width:72px;height:22px;background:linear-gradient(#a8a8a8,#9c9c9c)"></div>
<div class="a t" style="left:1311px;top:235.33px;font-size:12.32px;color:#222;transform:scaleX(0.917);">Eicle Meum</div>
<div class="a" style="left:1293px;top:249px;width:72px;height:333px;background:#fdfdfd"></div>
<div class="a" style="left:1328px;top:297px;width:40px;height:152px;border:1px solid #b3302f;box-shadow:0 0 1px rgba(240,70,70,.5)"></div>
<div class="a" style="left:1293px;top:582px;width:72px;height:1px;background:#8a8a8a"></div>
<div class="a" style="left:1293px;top:583px;width:72px;height:15px;background:#9a9a9a"></div>
<div class="a t" style="left:1297px;top:584.94px;font-size:11.59px;color:#222;transform:scaleX(0.931);">Seits</div>
<div class="a" style="left:1293px;top:598px;width:72px;height:1px;background:#8e8e8e"></div>
<svg class="a" style="left:1301px;top:606px;" width="18" height="13" viewBox="0 0 18 13"><rect x="4.5" y="0.5" width="9" height="5" fill="#eee" stroke="#444"/><rect x="0.5" y="7.5" width="7" height="5" fill="#f4f4f4" stroke="#444"/><rect x="10.5" y="7.5" width="7" height="5" fill="#f4f4f4" stroke="#444"/></svg>
<div class="a" style="left:1329px;top:606px;width:40px;height:17px;background:#a6a6a6;border:1px solid #6e6e6e"></div>
<div class="a t" style="left:1333px;top:610.18px;font-size:10.14px;color:#222;transform:scaleX(1.241);font-weight:bold">e</div>
<svg class="a" style="left:1301px;top:628px;" width="18" height="13" viewBox="0 0 18 13"><rect x="0.5" y="4.5" width="8" height="8" fill="#f0f0f0" stroke="#444"/><rect x="9.5" y="0.5" width="8" height="12" fill="#e8e8e8" stroke="#444"/></svg>
<svg class="a" style="left:1330px;top:627px;" width="18" height="15" viewBox="0 0 18 15"><path d="M2 8 Q1 3 6 3 Q9 0 13 2 Q17 3 16 8 Q17 13 11 13 H5 Q1 13 2 8 Z" fill="#f6f6f6" stroke="#777" stroke-width="0.8"/><text x="3" y="11" font-size="8" font-weight="bold" font-family="Liberation Sans" fill="#333">e.f</text></svg>
<svg class="a" style="left:1303px;top:650px;" width="14" height="15" viewBox="0 0 14 15"><path d="M7 1 Q13 5 13 9 Q13 14 7 14 Q1 14 1 9 Q1 5 7 1 Z" fill="#6aa0d8" stroke="#2a5a90"/><path d="M3 8 H11 M7 3 V13" stroke="#c8e0f8" stroke-width="0.8"/></svg>
<div class="a" style="left:1329px;top:646px;width:40px;height:17px;background:#b6b6b6;border:1px solid #7a7a7a"></div>
<div class="a t" style="left:1333px;top:649.94px;font-size:11.59px;color:#111;transform:scaleX(0.887);font-weight:bold">O</div>
<svg class="a" style="left:1301px;top:672px;" width="18" height="12" viewBox="0 0 18 12"><rect x="0.5" y="0.5" width="17" height="11" fill="#f0f0f0" stroke="#444"/><path d="M4 6 H14" stroke="#666" stroke-width="2"/></svg>
<div class="a" style="left:1330px;top:667px;width:40px;height:19px;background:#fcfcfc;border:1px solid #8a8a8a"></div>
<svg class="a" style="left:1335px;top:672px;" width="9" height="9" viewBox="0 0 9 9"><path d="M4.5 0.5 L8.5 4.5 L4.5 8.5 L0.5 4.5 Z" fill="#111"/></svg>
<div class="a t" style="left:1353px;top:668.48px;font-size:14.49px;color:#222;transform:scaleX(0.791);">|V3</div>
<svg class="a" style="left:1301px;top:691px;" width="18" height="10" viewBox="0 0 18 10"><path d="M17 2 H6 Q1 2 1 5 Q1 8 6 8 H17" fill="none" stroke="#444" stroke-width="1.2"/><path d="M3 5 L6 3 M3 5 L6 7" stroke="#444"/></svg>
<div class="a t" style="left:1332px;top:690.94px;font-size:11.59px;color:#f4f4f4;transform:scaleX(0.856);text-shadow:0 0 1px #222,0 0 1px #222">.Go</div>
<svg class="a" style="left:1301px;top:707px;" width="18" height="13" viewBox="0 0 18 13"><rect x="0.5" y="0.5" width="13" height="8" fill="#e8e8e8" stroke="#444"/><rect x="3.5" y="4.5" width="14" height="8" fill="#f0f0f0" stroke="#444"/></svg>
<div class="a" style="left:1330px;top:706px;width:40px;height:15px;background:#b8b8b8;border:1px solid #7a7a7a;border-radius:3px 0 0 3px"></div>
<div class="a t" style="left:1334px;top:707.94px;font-size:11.59px;color:#222;transform:scaleX(0.847);">or)</div>
<div class="a" style="left:60px;top:720px;width:1px;height:21px;background:#8a8a8a"></div>
<div class="a" style="left:61px;top:720px;width:1px;height:21px;background:#b8b8b8"></div>
<div class="a" style="left:89px;top:723px;width:1px;height:16px;background:#7a7a7a"></div>
<div class="a" style="left:90px;top:723px;width:1px;height:16px;background:#b8b8b8"></div>
<svg class="a" style="left:8px;top:727px;" width="12" height="12" viewBox="0 0 12 12"><rect x="0.5" y="0.5" width="11" height="11" rx="3" fill="#e8e8e8" stroke="#333"/><path d="M6 1 V11 M1 6 H11" stroke="#333"/></svg>
<svg class="a" style="left:31px;top:727px;" width="13" height="11" viewBox="0 0 13 11"><path d="M1 4 L4 1 H12 V7 L9 10 H1 Z" fill="#e8e8e8" stroke="#333"/><path d="M1 4 H9 V10 M9 4 L12 1" stroke="#333" fill="none"/></svg>
<svg class="a" style="left:70px;top:726px;" width="13" height="13" viewBox="0 0 13 13"><circle cx="6" cy="6" r="5" fill="none" stroke="#333" stroke-width="1.3"/><circle cx="6" cy="6" r="1.5" fill="#333"/><circle cx="11" cy="12" r="1" fill="#333"/></svg>
<svg class="a" style="left:96px;top:726px;" width="12" height="13" viewBox="0 0 12 13"><rect x="0.5" y="2.5" width="11" height="10" fill="#e8e8e8" stroke="#333"/><path d="M7 1 V8 M4 6 H10" stroke="#333"/></svg>
<svg class="a" style="left:118px;top:727px;" width="12" height="11" viewBox="0 0 12 11"><path d="M1 10 V5 L4 2 L6 5 L8 2 L11 5 V10 Z" fill="#d8d8d8" stroke="#333"/></svg>
<svg class="a" style="left:140px;top:726px;" width="13" height="12" viewBox="0 0 13 12"><rect x="0.5" y="0.5" width="12" height="11" rx="1.5" fill="#f0f0f0" stroke="#333"/><path d="M4 3 V9 M7 3 H10 M7 6 H10 M7 9 H10" stroke="#333"/></svg>
<div class="a t" style="left:158px;top:726.83px;font-size:12.32px;color:#2a2a2a;transform:scaleX(0.939);">Rbdiabot.cord</div>
<svg class="a" style="left:1136px;top:726px;" width="13" height="12" viewBox="0 0 13 12"><path d="M6.5 1 V11 M1 6 H12 M3 3 L10 9 M10 3 L3 9" stroke="#333" stroke-width="1.1"/></svg>
<svg class="a" style="left:1155px;top:726px;" width="13" height="13" viewBox="0 0 13 13"><circle cx="6.5" cy="6.5" r="5.5" fill="#ddd" stroke="#333"/><path d="M3 9 L10 4" stroke="#333"/></svg>
<div class="a" style="left:1172px;top:730.0px;width:0;height:0;border-left:2px solid transparent;border-right:2px solid transparent;border-top:2px solid #222"></div>
<div class="a" style="left:1181px;top:723px;width:1px;height:16px;background:#7a7a7a"></div>
<div class="a" style="left:1182px;top:723px;width:1px;height:16px;background:#b8b8b8"></div>
<div class="a t" style="left:1186px;top:725.83px;font-size:12.32px;color:#222;transform:scaleX(0.797);">Ous</div>
<div class="a" style="left:1208px;top:720px;width:1px;height:21px;background:#8a8a8a"></div>
<div class="a" style="left:1209px;top:720px;width:1px;height:21px;background:#b8b8b8"></div>
<svg class="a" style="left:1215px;top:726px;" width="12" height="12" viewBox="0 0 12 12"><circle cx="6" cy="6" r="4" fill="#333"/><circle cx="2" cy="3" r="2" fill="#333"/><circle cx="10" cy="3" r="2" fill="#333"/><circle cx="3" cy="10" r="2" fill="#333"/><circle cx="10" cy="10" r="2" fill="#333"/></svg>
<svg class="a" style="left:1237px;top:727px;" width="8" height="10" viewBox="0 0 8 10"><path d="M6 1 L1 5 L6 9 Z" fill="#333"/><path d="M7 1 V9" stroke="#333"/></svg>
<div class="a" style="left:1248px;top:726px;width:17px;height:12px;background:#f0f0f0;border:1px solid #555;border-radius:2px"></div>
<div class="a t" style="left:1252px;top:727.68px;font-size:10.14px;color:#333;transform:scaleX(0.638);">1:1</div>
<div class="a" style="left:1277px;top:730.5px;width:0;height:0;border-left:3px solid transparent;border-right:3px solid transparent;border-top:3px solid #222"></div>
<div class="a" style="left:1288px;top:720px;width:1px;height:21px;background:#8a8a8a"></div>
<div class="a" style="left:1289px;top:720px;width:1px;height:21px;background:#b8b8b8"></div>
<div class="a" style="left:1292px;top:720px;width:1px;height:21px;background:#6a6a6a"></div>
<svg class="a" style="left:1306px;top:725px;" width="13" height="14" viewBox="0 0 13 14"><rect x="0.5" y="0.5" width="12" height="13" fill="#f4f4f4" stroke="#333"/><text x="2.5" y="10" font-size="8" font-family="Liberation Sans" fill="#222">EI</text></svg>
<div class="a t" style="left:1323px;top:725.71px;font-size:13.04px;color:#222;transform:scaleX(0.847);">Mtioe</div>
<div class="a" style="left:1274px;top:754px;width:4px;height:3px;background:#bbb;border-radius:1px"></div>
<div class="a" style="left:1308px;top:754px;width:7px;height:3px;background:#bbb;border-radius:1px"></div></body></html>
